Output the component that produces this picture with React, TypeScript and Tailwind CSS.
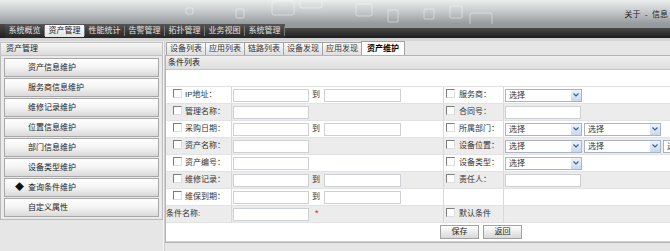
import { Fragment } from "react";

const navItems = ["系统概览", "资产管理", "性能统计", "告警管理", "拓扑管理", "业务视图", "系统管理"];
const menuItems = ["资产信息维护", "服务商信息维护", "维修记录维护", "位置信息维护", "部门信息维护", "设备类型维护", "查询条件维护", "自定义属性"];
const tabs = ["设备列表", "应用列表", "链路列表", "设备发现", "应用发现", "资产维护"];

const CheckBox = () => (
	<span className="inline-block w-[9px] h-[9px] bg-white border-t border-l border-t-[#7d7d7d] border-l-[#7d7d7d] border-r border-b border-r-[#dedede] border-b-[#dedede] shrink-0" />
);

const TextInput = ({ w = "w-[76px]" }: { w?: string }) => (
	<span className={`inline-block ${w} h-[13px] bg-white border border-[#cdd0d4]`} />
);

const Select = () => (
	<span className="inline-flex w-[77px] h-[13px] bg-white border border-[#a9b3c1] items-center justify-between shrink-0">
		<span className="pl-[3px] leading-[11px]">选择</span>
		<span className="w-[10px] h-[11px] bg-gradient-to-b from-[#eef3fb] to-[#c9d8ee] flex items-center justify-center">
			<svg width="6" height="4" viewBox="0 0 6 4">
				<path d="M0.5 0.5 L3 3 L5.5 0.5" stroke="#3d5f9a" strokeWidth="1.2" fill="none" />
			</svg>
		</span>
	</span>
);

type Row = {
	left: string | null;
	range?: boolean;
	right?: string;
	rightKind?: "select" | "select2" | "select3" | "input" | "none";
};

const rows: Row[] = [
	{ left: "IP地址：", range: true, right: "服务商：", rightKind: "select" },
	{ left: "管理名称：", right: "合同号：", rightKind: "input" },
	{ left: "采购日期：", range: true, right: "所属部门：", rightKind: "select2" },
	{ left: "资产名称：", right: "设备位置：", rightKind: "select3" },
	{ left: "资产编号：", right: "设备类型：", rightKind: "select" },
	{ left: "维修记录：", range: true, right: "责任人：", rightKind: "input" },
	{ left: "维保到期：", range: true },
	{ left: null, right: "默认条件", rightKind: "none" },
];

const App = () => {
	return (
		<div className="w-[670px] h-[251px] overflow-hidden bg-[#e6e6e6] text-[8px] text-[#333] font-['Liberation_Sans','Noto_Sans_CJK_SC',sans-serif]">
			{/* Header */}
			<div className="relative h-[24px] bg-gradient-to-b from-[#eceeef] via-[#c4c8ca] to-[#959a9d]">
				<svg className="absolute inset-0" width="670" height="24">
					<g fill="none" stroke="#ffffff" strokeOpacity="0.45" strokeWidth="1">
						<rect x="186" y="8" width="7" height="6" rx="1" />
						<rect x="236" y="9" width="8" height="9" rx="1" />
						<rect x="272" y="1" width="22" height="14" rx="2" />
						<rect x="300" y="-4" width="22" height="12" rx="2" />
						<rect x="356" y="4" width="16" height="12" rx="2" />
						<rect x="388" y="10" width="10" height="12" rx="1" />
						<rect x="424" y="9" width="10" height="10" rx="1" />
						<rect x="450" y="6" width="12" height="12" rx="1" />
						<rect x="470" y="13" width="22" height="12" rx="2" />
					</g>
				</svg>
				<div className="absolute right-[2px] top-[9px] whitespace-nowrap text-[#222]">
					关于 &nbsp;- &nbsp;信息
				</div>
			</div>
			<div className="flex h-[14px]">
				<div className="w-[5px] bg-gradient-to-b from-[#4a4a4a] to-[#1f1f1f]" />
				<div className="flex items-stretch bg-gradient-to-b from-[#555] to-[#262626]">
					{navItems.map((n, i) => (
						<Fragment key={n}>
							<div
								className={`w-[39px] flex items-center justify-center ${
									i === 1 ? "bg-gradient-to-b from-white to-[#e2e2e2] text-[#111] my-[1px]" : "text-[#e2e2e2]"
								}`}
							>
								{n}
							</div>
							<div className="w-px bg-[#7a7a7a] my-[2px]" />
						</Fragment>
					))}
				</div>
				<div className="flex-1 flex flex-col">
					<div className="h-[4px] bg-[#959a9d]" />
					<div className="flex-1 bg-gradient-to-b from-[#4a4a4a] to-[#1e1e1e]" />
				</div>
			</div>
			<div className="h-[3px] bg-[#d6d6d6]" />

			<div className="flex">
				{/* Left menu */}
				<div className="w-[163px] shrink-0">
					<div className="h-[14px] mt-[1px] bg-gradient-to-b from-[#f6f6f6] to-[#dcdcdc] border border-[#c3c3c3] pl-[5px] flex items-center text-[#222]">
						资产管理
					</div>
					<div className="bg-[#eaeaea] border border-t-0 border-[#b9b9b9] px-[3px] pt-[2px] pb-[2px] flex flex-col gap-[1px]">
						{menuItems.map((m, i) => (
							<div
								key={m}
								className="h-[19px] bg-gradient-to-b from-white via-[#f3f3f3] to-[#d9d9d9] border border-[#a8a8a8] flex items-center pl-[10px]"
							>
								<span className="w-[13px] text-[#111] text-[9px] leading-none">{i === 6 ? "◆" : ""}</span>
								<span className="text-[#222]">{m}</span>
							</div>
						))}
					</div>
				</div>
				<div className="w-[2px] h-[210px] bg-[#cfcfcf] border-l border-[#f4f4f4]" />

				{/* Right content */}
				<div className="flex-1 min-w-0 overflow-hidden">
					<div className="flex h-[14px] pl-[1px] items-end">
						{tabs.map((t, i) => (
							<div
								key={t}
								className={`h-[13px] flex items-center justify-center border border-b-0 border-[#a3a3a3] -ml-px first:ml-0 ${
									i === 5
										? "w-[44px] bg-white font-bold text-black h-[14px]"
										: "w-[40px] bg-gradient-to-b from-[#fbfbfb] to-[#dedede] text-[#333]"
								}`}
							>
								{t}
							</div>
						))}
					</div>
					<div className="w-[520px] border border-[#b4b4b4] bg-white">
						<div className="h-[14px] bg-gradient-to-b from-[#efefef] to-[#dedede] border-b border-[#c6c6c6] pl-[2px] flex items-center text-[#222]">
							条件列表
						</div>
						<div className="h-[17px] bg-white border-b border-[#e2e2e2]" />
						{rows.map((r, i) => (
							<div
								key={i}
								className={`grid grid-cols-[65px_212px_60px_1fr] h-[17px] border-b border-[#e2e2e2] ${
									i % 2 === 1 ? "bg-[#ececec]" : "bg-white"
								}`}
							>
								<div className="flex items-center">
									{r.left ? (
										<>
											<span className="ml-[7px] mr-[3px]"><CheckBox /></span>
											<span>{r.left}</span>
										</>
									) : (
										<span className="ml-0">条件名称:</span>
									)}
								</div>
								<div className="flex items-center border-l border-[#d8d8d8] pl-px">
									<TextInput />
									{r.range && (
										<>
											<span className="ml-[3px] mr-[4px]">到</span>
											<TextInput w="w-[77px]" />
										</>
									)}
									{!r.left && <span className="ml-[6px] text-[#e02020] text-[9px]">*</span>}
								</div>
								<div className="flex items-center border-l border-[#d8d8d8]">
									{r.right && (
										<>
											<span className="ml-[2px] mr-[4px]"><CheckBox /></span>
											<span>{r.right}</span>
										</>
									)}
								</div>
								<div className="flex items-center border-l border-[#d8d8d8] pl-px gap-[2px]">
									{r.rightKind === "select" && <Select />}
									{r.rightKind === "select2" && (
										<>
											<Select />
											<Select />
										</>
									)}
									{r.rightKind === "select3" && (
										<>
											<Select />
											<Select />
											<Select />
										</>
									)}
									{r.rightKind === "input" && <TextInput />}
								</div>
							</div>
						))}
						<div className="h-[19px] flex items-center gap-[4px] pl-[274px] border-b border-[#cfcfcf]">
							<button className="w-[39px] h-[14px] bg-gradient-to-b from-white to-[#d8d8d8] border border-[#a2a2a2] text-[#222] leading-none">
								保存
							</button>
							<button className="w-[39px] h-[14px] bg-gradient-to-b from-white to-[#d8d8d8] border border-[#a2a2a2] text-[#222] leading-none">
								返回
							</button>
						</div>
					</div>
				</div>
			</div>
		</div>
	);
};

export default App;
